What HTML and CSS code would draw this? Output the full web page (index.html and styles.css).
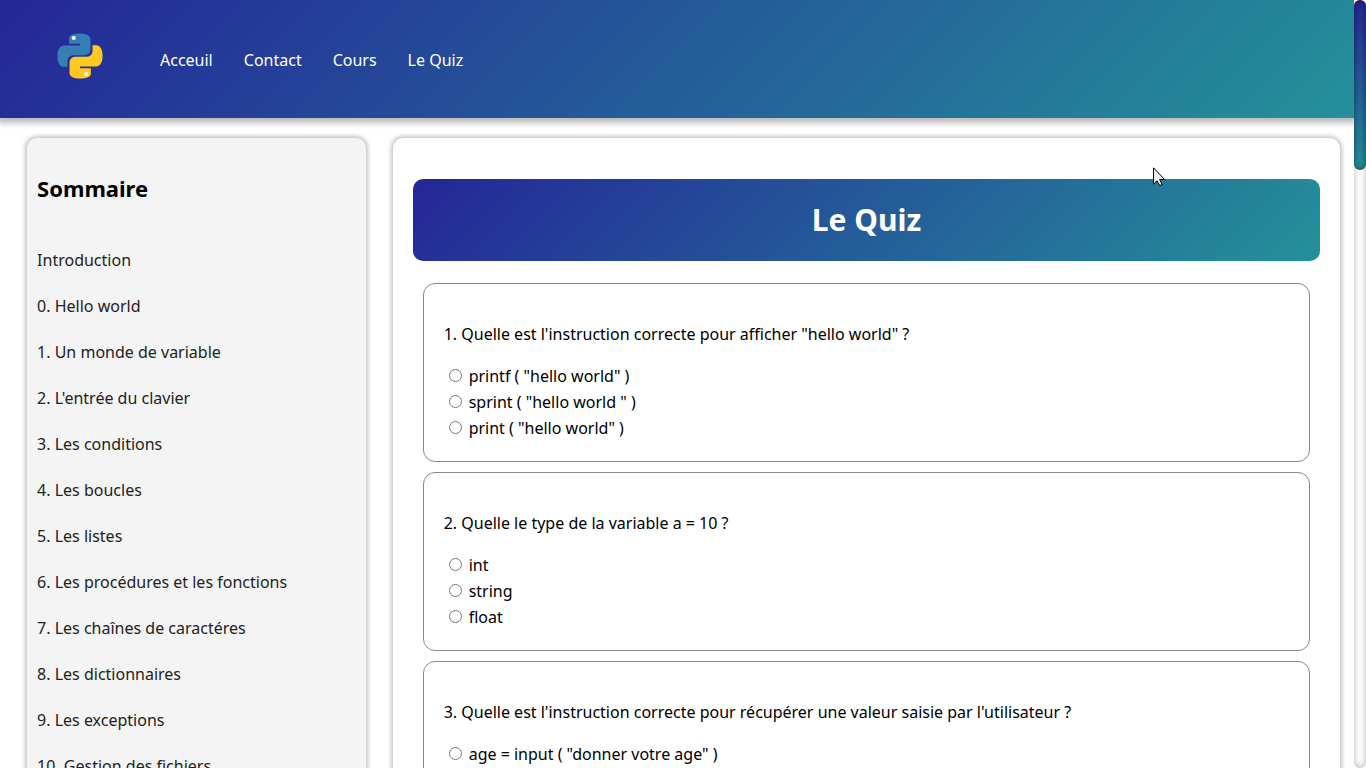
FILE: index.html
```html
<!DOCTYPE html>
<html lang="fr">
<head>
<meta charset="utf-8">
<meta name="viewport" content="width=device-width, initial-scale=1">
<title>Le Quiz</title>
<link rel="stylesheet" href="styles.css">
</head>
<body>
<div class="viewport">
  <div class="page">
    <header class="header">
      <a class="logo" href="#" aria-label="Python">
        <svg viewBox="0 0 110 110" width="46" height="46" aria-hidden="true">
          <path fill="#367fb5" d="M54 1C27 1 29 13 29 13v13h26v4H18S1 28 1 55s15 26 15 26h9V68s-1-15 15-15h26s14 0 14-14V15S82 1 54 1z"/>
          <circle cx="40" cy="12" r="5" fill="#fff"/>
          <path fill="#ffc922" d="M56 109c27 0 25-12 25-12V84H55v-4h37s17 2 17-25-15-26-15-26h-9v13s1 15-15 15H44s-14 0-14 14v24s-2 14 26 14z"/>
          <circle cx="70" cy="98" r="5" fill="#fff"/>
        </svg>
      </a>
      <nav class="nav">
        <a href="#">Acceuil</a>
        <a href="#">Contact</a>
        <button type="button">Cours</button>
        <a href="#">Le Quiz</a>
      </nav>
    </header>
    <div class="columns">
      <aside class="summary">
        <h2>Sommaire</h2>
        <ul>
          <li><a href="#">Introduction</a></li>
          <li><a href="#">0. Hello world</a></li>
          <li><a href="#">1. Un monde de variable</a></li>
          <li><a href="#">2. L'entrée du clavier</a></li>
          <li><a href="#">3. Les conditions</a></li>
          <li><a href="#">4. Les boucles</a></li>
          <li><a href="#">5. Les listes</a></li>
          <li><a href="#">6. Les procédures et les fonctions</a></li>
          <li><a href="#">7. Les chaînes de caractéres</a></li>
          <li><a href="#">8. Les dictionnaires</a></li>
          <li><a href="#">9. Les exceptions</a></li>
          <li><a href="#">10. Gestion des fichiers</a></li>
        </ul>
      </aside>
      <main class="quiz">
        <h1>Le Quiz</h1>
        <form>
          <fieldset class="question" aria-labelledby="q1">
            <p id="q1">1. Quelle est l'instruction correcte pour afficher "hello world" ?</p>
            <label><input type="radio" name="q1">printf ( "hello world" )</label>
            <label><input type="radio" name="q1">sprint ( "hello world " )</label>
            <label><input type="radio" name="q1">print ( "hello world" )</label>
          </fieldset>
          <fieldset class="question" aria-labelledby="q2">
            <p id="q2">2. Quelle le type de la variable a = 10 ?</p>
            <label><input type="radio" name="q2">int</label>
            <label><input type="radio" name="q2">string</label>
            <label><input type="radio" name="q2">float</label>
          </fieldset>
          <fieldset class="question" aria-labelledby="q3">
            <p id="q3">3. Quelle est l'instruction correcte pour récupérer une valeur saisie par l'utilisateur ?</p>
            <label><input type="radio" name="q3">age = input ( "donner votre age" )</label>
          </fieldset>
        </form>
      </main>
    </div>
  </div>
  <div class="scrollbar" aria-hidden="true"><div class="thumb"></div></div>
</div>
<svg class="cursor" viewBox="0 0 12 20" width="12" height="20" aria-hidden="true">
  <path d="M.5.8v16.4l3.6-3.4 2.6 4.8 2.4-1.2-2.5-4.9h5z" fill="#eee" stroke="#000"/>
</svg>
</body>
</html>
```
FILE: styles.css
```css
* { box-sizing: border-box; }
body {
  margin: 0;
  background: #fff;
  color: #000;
  font: 16px/26px "Noto Sans", "Open Sans", sans-serif;
}
a { color: inherit; text-decoration: none; }
.viewport { display: flex; height: 100vh; overflow: hidden; }
.page { flex: 1; min-width: 0; overflow: hidden; }
.header {
  display: flex;
  align-items: center;
  min-height: 118px;
  padding: 0 57px;
  gap: 57px;
  background: linear-gradient(135deg, #242698, #24919a);
  box-shadow: 0 2px 6px 3px #bbb;
  color: #fff;
}
.logo { display: flex; padding-bottom: 6px; }
.nav { display: flex; gap: 31px; padding-top: 2px; }
.nav button {
  padding: 0;
  border: 0;
  background: none;
  color: inherit;
  font: inherit;
}
.columns { display: flex; padding-top: 20px; }
.summary, .quiz {
  flex: none;
  margin-left: 2%;
  border-radius: 10px;
  box-shadow: 0 0 4px 2px #c4c4c4;
}
.summary {
  width: 25%;
  padding: 10px;
  background: #f4f4f4;
  color: #222;
}
.summary h2 { margin: 23px 0 42px; font-size: 22px; line-height: 34px; color: #000; }
.summary ul {
  display: flex;
  flex-direction: column;
  gap: 20px;
  margin: 0;
  padding: 0;
  list-style: none;
}
.quiz { width: 70%; padding: 41px 20px 20px; }
.quiz h1 {
  margin: 0 0 22px;
  padding: 16px;
  border-radius: 10px;
  background: linear-gradient(135deg, #242698, #24919a);
  color: #fff;
  font-size: 30px;
  line-height: 50px;
  text-align: center;
}
.quiz form {
  display: flex;
  flex-direction: column;
  gap: 10px;
  padding: 0 10px;
}
.question {
  margin: 0;
  min-width: 0;
  padding: 21px 20px 20px;
  border: 1px solid #888;
  border-radius: 12px;
}
.question p { margin: 16px 0; }
.question label { display: flex; align-items: center; }
.question input { width: 13px; height: 13px; margin: 0 7px 2px 5px; }
.scrollbar {
  width: 12px;
  border-radius: 10px;
  background: #fff;
  box-shadow: inset 0 0 6px rgba(0, 0, 0, .3);
}
.thumb {
  height: 170px;
  border-radius: 10px;
  background: linear-gradient(#242698, #24919a);
  box-shadow: inset 0 0 6px rgba(0, 0, 0, .5);
}
.cursor { position: absolute; left: 1153px; top: 167px; }
```
